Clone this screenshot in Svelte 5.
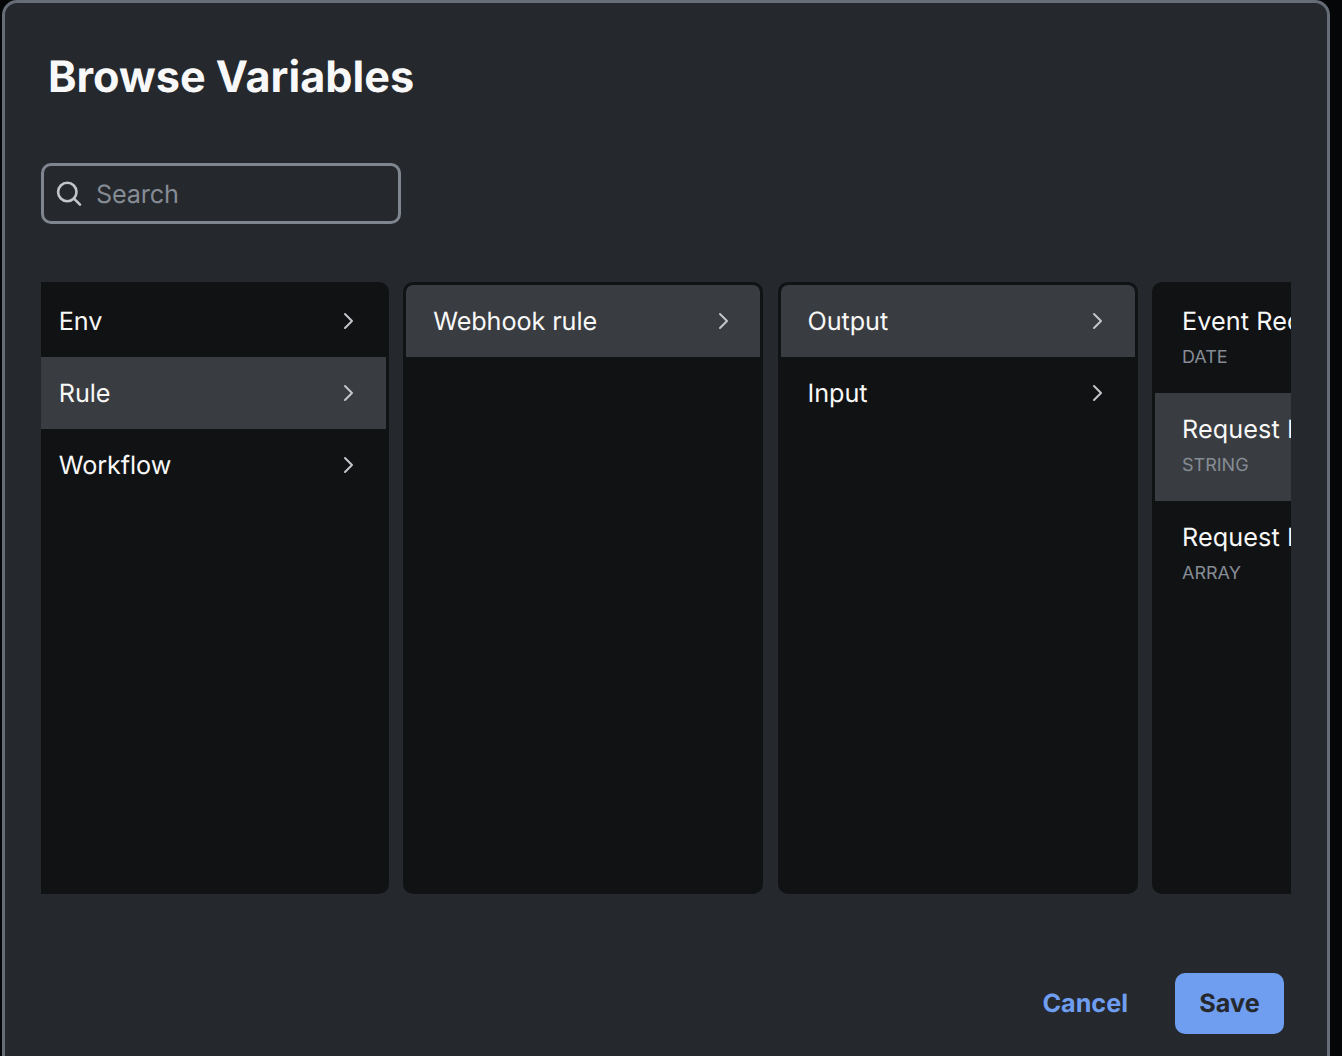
<script>
  const columns = [
    {
      items: [
        { label: 'Env' },
        { label: 'Rule', selected: true },
        { label: 'Workflow' }
      ]
    },
    { items: [{ label: 'Webhook rule', selected: true }] },
    { items: [{ label: 'Output', selected: true }, { label: 'Input' }] },
    {
      items: [
        { label: 'Event Received', type: 'DATE' },
        { label: 'Request Body', type: 'STRING', selected: true },
        { label: 'Request Headers', type: 'ARRAY' }
      ]
    }
  ];
</script>

<div class="backdrop">
  <div class="dialog" role="dialog" aria-labelledby="title">
    <h1 id="title">Browse Variables</h1>

    <label class="search">
      <svg class="lens" viewBox="0 0 28 28" aria-hidden="true">
        <circle cx="12.3" cy="12" r="9.2" />
        <path d="M19 18.7 L25 24.7" />
      </svg>
      <input type="text" placeholder="Search" aria-label="Search" />
    </label>

    <div class="browser">
      <div class="track">
        {#each columns as column}
          <ul class="column">
            {#each column.items as item}
              <li class="row" class:selected={item.selected} class:typed={item.type}>
                <div class="text">
                  <span class="label">{item.label}</span>
                  {#if item.type}<span class="type">{item.type}</span>{/if}
                </div>
                {#if !item.type}
                  <svg class="chevron" viewBox="0 0 12 18" aria-hidden="true">
                    <path d="M2 2 L9 9 L2 16" />
                  </svg>
                {/if}
              </li>
            {/each}
          </ul>
        {/each}
      </div>
    </div>

    <footer>
      <button class="cancel">Cancel</button>
      <button class="save">Save</button>
    </footer>
  </div>
</div>

<style>
  :global(body) {
    margin: 0;
    background: #050607;
    overflow: hidden;
  }

  .backdrop {
    box-sizing: border-box;
    height: 1056px;
    padding: 0 12px 0 2px;
    overflow: hidden;
    font-family: Inter, 'Liberation Sans', sans-serif;
    text-rendering: geometricPrecision;
  }

  .dialog {
    box-sizing: border-box;
    height: 1096px;
    padding: 0 36px;
    border: 3px solid #666d76;
    border-radius: 15px;
    background: #25282c;
    color: #f8f8f8;
  }

  h1 {
    margin: 0 0 0 7px;
    padding-top: 47px;
    font-size: 43.2px;
    line-height: 54px;
    font-weight: 700;
    white-space: nowrap;
  }

  .search {
    box-sizing: border-box;
    display: flex;
    align-items: center;
    width: 360px;
    height: 61px;
    margin-top: 59px;
    padding-left: 11px;
    border: 3px solid #80868f;
    border-radius: 10px;
  }

  .lens {
    flex: none;
    width: 28px;
    height: 28px;
    fill: none;
    stroke: #c2c5c9;
    stroke-width: 2.6;
    stroke-linecap: round;
  }

  input {
    flex: 1;
    min-width: 0;
    margin: 0;
    padding: 2px 0 0 13px;
    border: 0;
    outline: 0;
    background: none;
    color: #f8f8f8;
    font: 400 25.2px/36px Inter, 'Liberation Sans', sans-serif;
    letter-spacing: -0.15px;
    text-rendering: geometricPrecision;
  }

  input::placeholder {
    color: #858c95;
    opacity: 1;
  }

  .browser {
    height: 612px;
    margin-top: 58px;
    overflow: hidden;
  }

  .track {
    display: flex;
    gap: 14.4px;
    width: max-content;
    height: 100%;
    margin-left: -12.2px;
  }

  .column {
    box-sizing: border-box;
    width: 360px;
    margin: 0;
    padding: 0;
    border: 3px solid #111214;
    border-radius: 10px;
    background: #111214;
    list-style: none;
    overflow: hidden;
  }

  .row {
    box-sizing: border-box;
    display: flex;
    align-items: center;
    justify-content: space-between;
    height: 72px;
    padding: 0 30.6px 0 27px;
  }

  .row.typed {
    align-items: flex-start;
    height: 108px;
    padding-top: 18px;
  }

  .selected {
    background: #393c40;
  }

  .text {
    display: flex;
    flex-direction: column;
  }

  .label {
    padding-top: 2px;
    font-size: 25.2px;
    line-height: 36px;
    letter-spacing: -0.08px;
    white-space: nowrap;
  }

  .typed .label {
    padding-top: 1px;
    letter-spacing: 0.1px;
  }

  .type {
    color: #858c95;
    font-size: 18px;
    line-height: 36px;
  }

  .chevron {
    flex: none;
    width: 12px;
    height: 18px;
    fill: none;
    stroke: #c2c5c9;
    stroke-width: 2;
    stroke-linecap: round;
    stroke-linejoin: round;
  }

  footer {
    display: flex;
    justify-content: flex-end;
    gap: 23px;
    margin-top: 79px;
    padding-right: 7px;
  }

  button {
    height: 61px;
    margin: 0;
    padding: 1px 24px 0;
    border: 0;
    border-radius: 10px;
    background: none;
    font: 700 25.2px/36px Inter, 'Liberation Sans', sans-serif;
    text-rendering: geometricPrecision;
  }

  .cancel {
    color: #6f9df0;
  }

  .save {
    width: 109px;
    background: #6f9df0;
    color: #25282d;
  }
</style>
